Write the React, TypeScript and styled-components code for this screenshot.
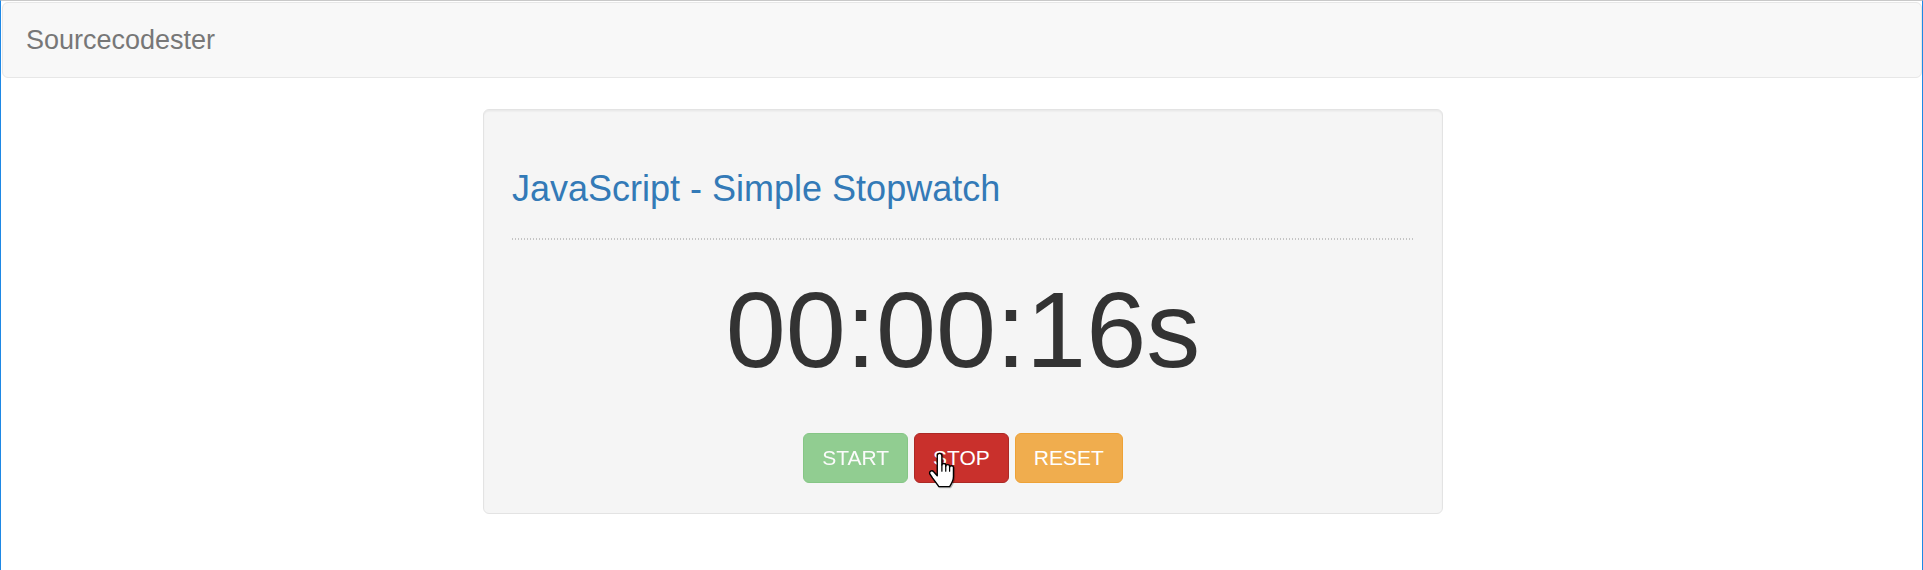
import React from "react";
import styled, { createGlobalStyle } from "styled-components";

const GlobalStyle = createGlobalStyle`
  * { box-sizing: border-box; }
  html, body { margin: 0; padding: 0; background: #ffffff; }
  body {
    font-family: "Liberation Sans", Arial, Helvetica, sans-serif;
    color: #333333;
  }
`;

const Frame = styled.div`
  min-height: 100vh;
  border-top: 1px solid #c9c9c9;
  border-left: 1px solid #1e88e5;
  border-right: 1px solid #1e88e5;
  background: #ffffff;
`;

const Navbar = styled.nav`
  height: 76px;
  margin: 1px 0 31px 1px;
  display: flex;
  align-items: center;
  padding: 0 22px 0 23px;
  background: #f8f8f8;
  border: 1px solid #e7e7e7;
  border-radius: 6px;
`;

const Brand = styled.a`
  font-size: 27px;
  line-height: 30px;
  color: #777777;
  text-decoration: none;
`;

const Container = styled.main`
  display: flex;
  padding-left: 482px;
`;

const Well = styled.section`
  width: 960px;
  padding: 28px 28px 30px;
  background: #f5f5f5;
  border: 1px solid #e3e3e3;
  border-radius: 6px;
  box-shadow: inset 0 1.5px 1.5px rgba(0, 0, 0, 0.05);
`;

const Title = styled.h3`
  margin: 31px 0 0;
  font-size: 36px;
  font-weight: 400;
  line-height: 40px;
  color: #337ab7;
`;

const Divider = styled.hr`
  margin: 29px 0 30px;
  height: 1.5px;
  border: 0;
  background: repeating-linear-gradient(
    90deg,
    #c4c4c4 0 1.5px,
    transparent 1.5px 3px
  );
`;

const Centered = styled.div`
  text-align: center;
`;

const Clock = styled.div`
  font-size: 108px;
  line-height: 119px;
  color: #333333;
`;

const Actions = styled.div`
  margin-top: 44px;
  display: flex;
  justify-content: center;
  gap: 6px;
`;

type Tone = "success" | "danger" | "warning";

const tones: Record<Tone, { bg: string; border: string }> = {
  success: { bg: "#5cb85c", border: "#4cae4c" },
  danger: { bg: "#c9302c", border: "#ac2925" },
  warning: { bg: "#f0ad4e", border: "#eea236" },
};

const Button = styled.button<{ $tone: Tone; $off?: boolean }>`
  position: relative;
  padding: 9px 18px;
  font-family: "Liberation Sans", Arial, Helvetica, sans-serif;
  font-size: 21px;
  line-height: 30px;
  color: #ffffff;
  background: ${(p) => tones[p.$tone].bg};
  border: 1px solid ${(p) => tones[p.$tone].border};
  border-radius: 6px;
  opacity: ${(p) => (p.$off ? 0.65 : 1)};
  cursor: ${(p) => (p.$off ? "not-allowed" : "pointer")};
`;

const Pointer = styled.svg`
  position: absolute;
  left: 13px;
  top: 17px;
  width: 27px;
  height: 38px;
  pointer-events: none;
  filter: drop-shadow(1px 1px 0.5px rgba(0, 0, 0, 0.25));
`;

const HandCursor = () => (
  <Pointer viewBox="-0.5 -0.5 17.5 22.5">
    <path
      d="M5.5 1.5C5.5 0.7 6.2 0 7 0C7.8 0 8.5 0.7 8.5 1.5L8.5 7.5C8.5 6.9 9.1 6.5 9.8 6.5C10.5 6.5 11 6.9 11 7.5L11 8.3C11 7.7 11.6 7.3 12.3 7.3C13 7.3 13.5 7.7 13.5 8.3L13.5 9C13.5 8.4 14.1 8 14.8 8C15.5 8 16 8.4 16 9L16 15C16 18 14.5 20 13.5 21.5L6.5 21.5C5.5 20 4 18 2.5 16L0.8 13.5C0.3 12.8 0.5 11.9 1.2 11.5C1.9 11.1 2.8 11.4 3.3 12L5.5 14.5Z"
      fill="#ffffff"
      stroke="#000000"
      strokeWidth="0.9"
      strokeLinejoin="round"
    />
    <path
      d="M8.5 7.5L8.5 11.5M11 8.3L11 11.5M13.5 9L13.5 11.5"
      fill="none"
      stroke="#000000"
      strokeWidth="0.8"
      strokeLinecap="round"
    />
  </Pointer>
);

export default function App() {
  return (
    <>
      <GlobalStyle />
      <Frame>
        <Navbar>
          <Brand href="#">Sourcecodester</Brand>
        </Navbar>
        <Container>
          <Well>
            <Title>JavaScript - Simple Stopwatch</Title>
            <Divider />
            <Centered>
              <Clock>00:00:16s</Clock>
              <Actions>
                <Button $tone="success" $off>
                  START
                </Button>
                <Button $tone="danger">
                  STOP
                  <HandCursor />
                </Button>
                <Button $tone="warning">RESET</Button>
              </Actions>
            </Centered>
          </Well>
        </Container>
      </Frame>
    </>
  );
}
